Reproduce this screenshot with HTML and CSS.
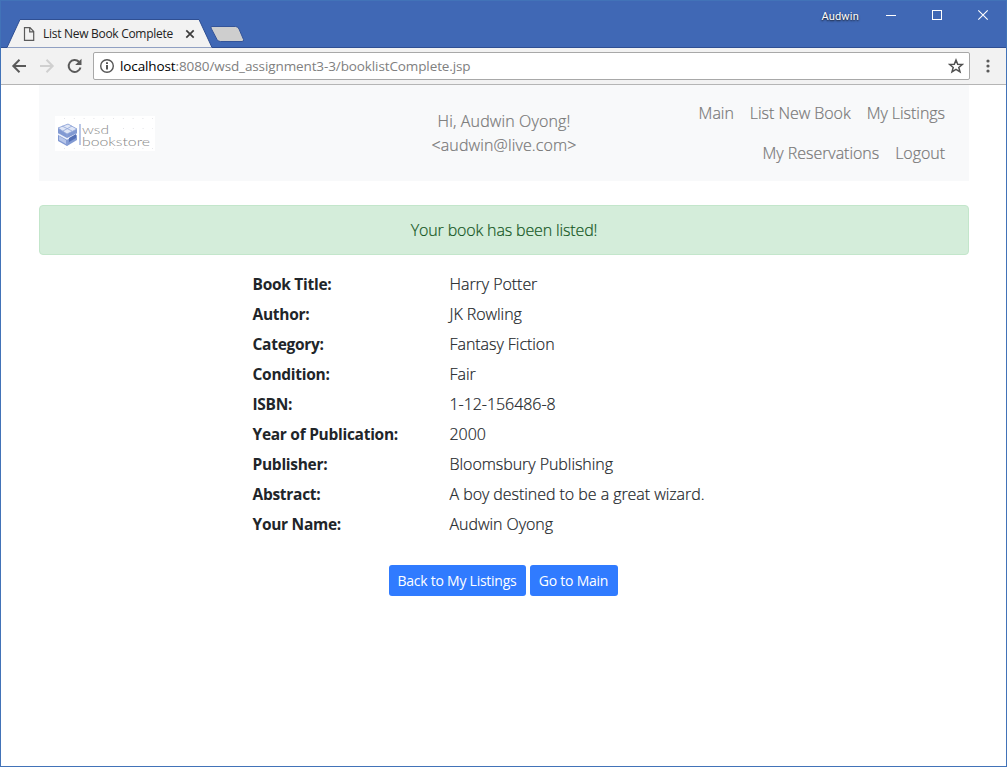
FILE: index.html
```html
<!DOCTYPE html>
<html lang="en">
<head>
<meta charset="utf-8">
<title>List New Book Complete</title>
<link rel="stylesheet" href="styles.css">
</head>
<body>
<div class="window">
  <header class="titlebar">
    <div class="tabs">
      <svg class="tab-shapes" width="250" height="29" viewBox="0 0 250 29">
        <path d="M0 28.500H6L19 .5H198L211 28.500H250V29H0Z" fill="#f2f2f2" stroke="#2f4f93" stroke-width="1"/>
        <path d="M211 7.500H234.500Q237 7.500 238 10L242.500 20.500Q243 22.500 241 22.500H219.500Q217 22.500 216 20.500L210 9Q209.500 7.500 211 7.500Z" fill="#cecece" stroke="#345499"/>
      </svg>
      <div class="tab">
        <svg class="page-icon" width="12" height="14" viewBox="0 0 12 14"><path d="M1.500 .7H7L10.700 4.500V13.300H1.500ZM6.700 .7V4.800H10.700" fill="none" stroke="#5a5a5a" stroke-width="1.200"/></svg>
        <span class="tab-title">List New Book Complete</span>
        <svg class="tab-close" width="10" height="10" viewBox="0 0 10 10"><path d="M1.300 1.300 8.700 8.700M8.700 1.300 1.300 8.700" stroke="#3c3c3c" stroke-width="1.700"/></svg>
      </div>
    </div>
    <div class="controls">
      <span class="profile">Audwin</span>
      <svg width="110" height="16" viewBox="0 0 110 16" fill="none" stroke="#fff"><path d="M2 7.500H12"/><rect x="48.500" y="2.500" width="9" height="9"/><path d="M94.300 2.300 103.700 11.700M103.700 2.300 94.300 11.700" stroke-width="1.100"/></svg>
    </div>
  </header>
  <div class="toolbar">
    <svg class="nav-icons" width="75" height="18" viewBox="0 0 75 18" fill="none" stroke-width="2">
      <path d="M17 9H4.500M10.500 2.800 4.300 9 10.500 15.200" stroke="#5a5a5a"/>
      <path d="M31 9H43.500M37.500 2.800 43.700 9 37.500 15.200" stroke="#d0d0d0"/>
      <path d="M70 4.800A6 6 0 1 0 71.500 10.500" stroke="#5a5a5a"/><path d="M72.500 1.700V8H66.200Z" fill="#5a5a5a"/>
    </svg>
    <div class="address">
      <svg width="16" height="16" viewBox="0 0 16 16"><circle cx="8" cy="8" r="6.300" fill="none" stroke="#555" stroke-width="1.400"/><path d="M7.100 7H8.900V11.600H7.100ZM7.100 4.300H8.900V5.900H7.100Z" fill="#444"/></svg>
      <span class="url"><span class="host">localhost</span>:8080/wsd_assignment3-3/booklistComplete.jsp</span>
      <svg class="star" width="16" height="16" viewBox="0 0 16 16"><path d="M8 2 9.700 6.200 14.300 6.500 10.800 9.400 12 13.800 8 11.400 4 13.800 5.200 9.400 1.700 6.500 6.300 6.200Z" fill="none" stroke="#505050" stroke-width="1.500"/></svg>
    </div>
    <svg class="menu-icon" width="4" height="14" viewBox="0 0 4 14" fill="#5a5a5a"><circle cx="2" cy="2" r="1.600"/><circle cx="2" cy="7" r="1.600"/><circle cx="2" cy="12" r="1.600"/></svg>
  </div>
  <main class="page">
    <nav class="navbar">
      <svg class="logo" width="100" height="35" viewBox="0 0 100 35">
        <rect width="100" height="35" fill="#fff"/>
        <path d="M3 12 13 8 22 13V24L12 30 3 25Z" fill="#8199d2"/>
        <path d="M3 12 13 8 22 13 12 18Z" fill="#dfe6f6"/>
        <path d="M3 12 13 8 22 13 12 18ZM7 10 17 15M8 15 17 10M12 18V30" fill="none" stroke="#8fa5d8" stroke-width=".8"/>
        <path d="M3 18 12 23 22 18" fill="none" stroke="#eef2fc" stroke-width="1.500"/>
        <path d="M14 22 21 18V22L14 26Z" fill="#536fb5"/>
        <path d="M4 20 11 24V28L4 24Z" fill="#b7c6ea"/>
        <path d="M25 8V29" stroke="#9cb0df" stroke-width="1.400"/>
        <text class="logo-text" x="27" y="17.500" textLength="27" lengthAdjust="spacingAndGlyphs">wsd</text>
        <text class="logo-text" x="27" y="29.500" textLength="68" lengthAdjust="spacingAndGlyphs">bookstore</text>
        <path d="M9 2.500H98M68 12.500H98M9 32.500H98" stroke="#e3e3e8" stroke-dasharray="1 8.800"/>
      </svg>
      <div class="greeting">Hi, Audwin Oyong!<br><span class="mail">&lt;audwin@live.com&gt;</span></div>
      <div class="links"><a>Main</a><a>List New Book</a><a>My Listings</a><a>My Reservations</a><a>Logout</a></div>
    </nav>
    <div class="alert">Your book has been listed!</div>
    <dl class="details">
      <dt>Book Title:</dt><dd>Harry Potter</dd>
      <dt>Author:</dt><dd>JK Rowling</dd>
      <dt>Category:</dt><dd>Fantasy Fiction</dd>
      <dt>Condition:</dt><dd>Fair</dd>
      <dt>ISBN:</dt><dd>1-12-156486-8</dd>
      <dt>Year of Publication:</dt><dd>2000</dd>
      <dt>Publisher:</dt><dd>Bloomsbury Publishing</dd>
      <dt>Abstract:</dt><dd>A boy destined to be a great wizard.</dd>
      <dt>Your Name:</dt><dd>Audwin Oyong</dd>
    </dl>
    <div class="actions"><a class="btn btn-back">Back to My Listings</a><a class="btn btn-main">Go to Main</a></div>
  </main>
</div>
</body>
</html>
```
FILE: styles.css
```css
* { box-sizing: border-box; }
body { margin: 0; font-family: "Open Sans", "Noto Sans", sans-serif; }
svg { display: block; flex: none; }
.window { width: 1007px; height: 767px; border: 1px solid #4273b8; background: #fff; overflow: hidden; }
.titlebar { height: 47px; background: #4068b5; display: flex; justify-content: space-between; border-bottom: 1px solid #2f4f93; }
.tabs { position: relative; margin-top: 18px; width: 250px; height: 29px; }
.tab-shapes { position: absolute; left: 0; top: 0; }
.tab { position: relative; display: flex; align-items: center; height: 29px; padding-left: 22px; }
.tab-title { width: 140px; margin-left: 8px; font-size: 12px; letter-spacing: -.29px; color: #222; white-space: nowrap; }
.tab-close { margin-left: 2px; }
.controls { display: flex; height: 30px; align-items: center; padding-right: 12px; }
.controls svg { margin-left: 25px; }
.profile { color: #fff; font: 11px Roboto, sans-serif; letter-spacing: .2px; text-shadow: 0 1px 2px #111; }
.toolbar { height: 37px; background: #f2f2f2; border-bottom: 1px solid #b5b5b5; display: flex; align-items: center; padding: 0 15px 0 8px; }
.address { width: 877px; height: 28px; margin-left: 9px; border: 1px solid #a8a8a8; border-radius: 2px; background: #fff; display: flex; align-items: center; padding: 0 5px; }
.url { flex: 1; margin-left: 5px; font-size: 13.5px; letter-spacing: -.11px; color: #808080; white-space: nowrap; }
.host { color: #000; }
.menu-icon { margin-left: 16px; }
.page { padding: 0 37px 0 38px; font-size: 16px; line-height: 24px; font-weight: 300; color: #212529; -webkit-text-stroke-width: .2px; }
.navbar { height: 96px; background: #f8f9fa; padding: 8px 16px; display: grid; grid-template-columns: 299px 1fr 299px; align-items: center; }
.logo-text { font: 300 12px Lato, sans-serif; fill: #888; }
.greeting { text-align: center; color: #777; letter-spacing: .13px; }
.links { margin-right: 8px; display: flex; flex-wrap: wrap; justify-content: flex-end; gap: 0 16px; letter-spacing: -.04px; }
.links a { padding: 8px 0; color: #777; white-space: nowrap; }
.alert { height: 50px; margin-top: 24px; border: 1px solid #c3e6cb; border-radius: 4px; background: #d4edda; color: #155724; text-align: center; padding: 12px; letter-spacing: -.14px; }
.details { margin: 14px 0 0 213.500px; display: grid; grid-template-columns: 197px 1fr; grid-auto-rows: 30px; line-height: 30px; }
dt { font-size: 15.5px; font-weight: 700; letter-spacing: -.28px; -webkit-text-stroke-width: 0; }
dd { margin: 0; letter-spacing: -.05px; }
.actions { margin: 26px 2px 0 0; display: flex; justify-content: center; gap: 4px; }
.btn { height: 31px; border-radius: 3px; background: #307bff; color: #fff; font-size: 14px; font-weight: 400; line-height: 31px; letter-spacing: -.25px; text-align: center; white-space: nowrap; -webkit-text-stroke-width: 0; }
.btn-back { width: 137px; }
.btn-main { width: 88px; }
```
